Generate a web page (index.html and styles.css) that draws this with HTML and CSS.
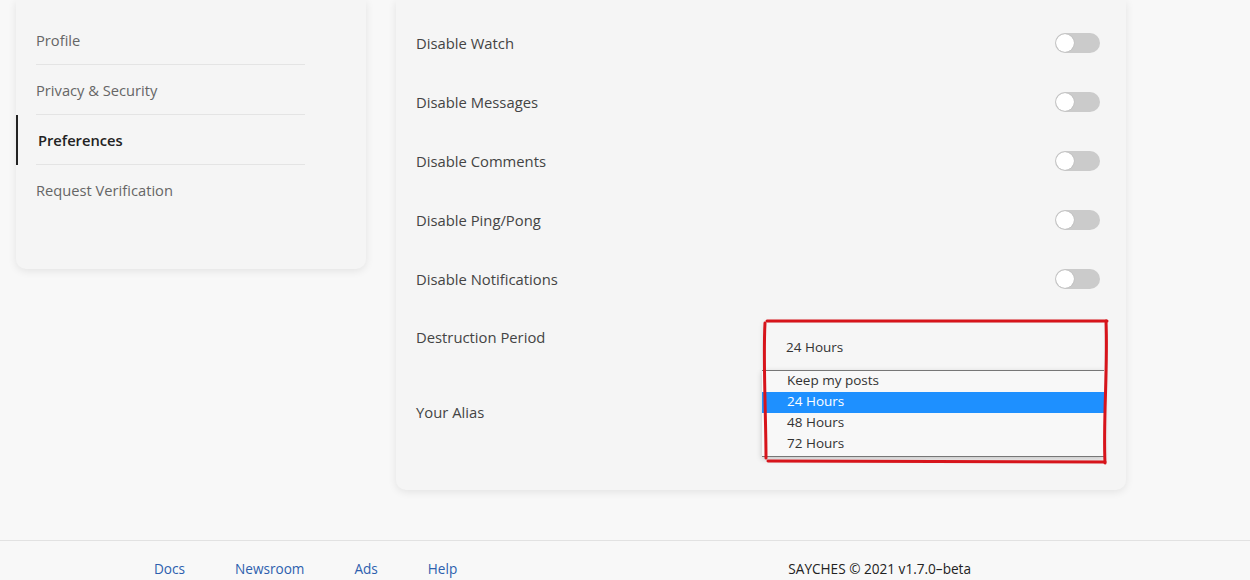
FILE: index.html
```html
<!DOCTYPE html>
<html>
<head>
    <title>Settings - Preferences</title>
    <link rel="stylesheet" href="styles.css">
</head>
<body>
    <div id="pageDiv">
        <div id="sideCard" class="card">
            <a class="navItem">Profile</a>
            <a class="navItem">Privacy &amp; Security</a>
            <a class="navItem active">Preferences</a>
            <a class="navItem last">Request Verification</a>
        </div>
        <div id="mainCard" class="card">
            <div class="row">
                <span class="label">Disable Watch</span>
                <span class="toggle"><span class="knob"></span></span>
            </div>
            <div class="row">
                <span class="label">Disable Messages</span>
                <span class="toggle"><span class="knob"></span></span>
            </div>
            <div class="row">
                <span class="label">Disable Comments</span>
                <span class="toggle"><span class="knob"></span></span>
            </div>
            <div class="row">
                <span class="label">Disable Ping/Pong</span>
                <span class="toggle"><span class="knob"></span></span>
            </div>
            <div class="row">
                <span class="label">Disable Notifications</span>
                <span class="toggle"><span class="knob"></span></span>
            </div>
            <div class="row selectRow">
                <span class="label">Destruction Period</span>
                <div class="selectWrap">
                    <div class="selectBox">24 Hours</div>
                    <div class="optionList">
                        <div class="option">Keep my posts</div>
                        <div class="option picked">24 Hours</div>
                        <div class="option">48 Hours</div>
                        <div class="option">72 Hours</div>
                    </div>
                    <svg class="scribble" width="350" height="148" viewBox="0 0 350 148">
                        <path d="M5 2 L345 2" />
                        <path d="M344 2 C346 50 341 100 343 144" />
                        <path d="M6 142 L343 143" />
                        <path d="M3 4 C1 40 4 100 4 139" />
                    </svg>
                </div>
            </div>
            <div class="row aliasRow">
                <span class="label">Your Alias</span>
            </div>
        </div>
    </div>
    <footer id="footer">
        <div id="links">
            <a class="link">Docs</a>
            <a class="link">Newsroom</a>
            <a class="link">Ads</a>
            <a class="link">Help</a>
        </div>
        <span id="copy">SAYCHES &copy; 2021 v1.7.0&ndash;beta</span>
    </footer>
</body>
</html>
```

FILE: styles.css
```css
body{
    margin: 0px;
    height: 580px;
    overflow: hidden;
    background-color: #f8f8f8;
    font-family: "Open Sans", "Noto Sans", sans-serif;
    color: #444;
}

#pageDiv{
    display: flex;
    flex-direction: row;
    align-items: flex-start;
    gap: 30px;
    padding-left: 16px;
    height: 540px;
}

.card{
    background-color: #f5f5f5;
    border-radius: 0px 0px 10px 10px;
    box-shadow: 0px 2px 8px rgba(0, 0, 0, 0.09);
}

#sideCard{
    display: flex;
    flex-direction: column;
    width: 350px;
    padding-top: 15px;
    padding-bottom: 55px;
}

.navItem{
    display: flex;
    align-items: center;
    height: 49px;
    margin-left: 20px;
    width: 269px;
    border-bottom: 1px solid #e4e4e4;
    font-size: 14.7px;
    color: #666;
}

.navItem.last{
    border-bottom: none;
}

.navItem.active{
    position: relative;
    padding-left: 2px;
    width: 267px;
    font-weight: 600;
    color: #222;
}

.navItem.active::before{
    content: "";
    position: absolute;
    left: -20px;
    top: 0px;
    width: 2px;
    height: 50px;
    background-color: #222;
}

#mainCard{
    display: flex;
    flex-direction: column;
    width: 730px;
    padding: 13px 26px 49px 20px;
    box-sizing: border-box;
}

.row{
    display: flex;
    flex-direction: row;
    justify-content: space-between;
    align-items: center;
    height: 59px;
}

.label{
    font-size: 14.8px;
    color: #444;
}

.toggle{
    display: flex;
    align-items: center;
    width: 45px;
    height: 20px;
    border-radius: 10px;
    background-color: #cbcbcb;
}

.knob{
    width: 18px;
    height: 18px;
    margin-left: 1px;
    border-radius: 50%;
    background-color: #fff;
    box-shadow: 0px 0px 1px rgba(0, 0, 0, 0.3);
}

.selectRow{
    height: 75px;
    align-items: flex-start;
}

.selectRow .label{
    line-height: 59px;
}

.selectWrap{
    position: relative;
    width: 340px;
    margin-top: 15px;
    margin-right: -4px;
}

.selectBox{
    display: flex;
    align-items: center;
    height: 48px;
    padding-left: 22px;
    font-size: 13.5px;
    color: #333;
    background-color: #f6f6f6;
    box-shadow: 0px 0px 6px rgba(0, 0, 0, 0.12);
}

.optionList{
    position: absolute;
    top: 47px;
    left: -2px;
    width: 342px;
    background-color: #f8f8f8;
    border-top: 1px solid #777;
    border-bottom: 1px solid #777;
    box-shadow: 0px 2px 6px rgba(0, 0, 0, 0.2);
    padding-bottom: 1px;
    z-index: 2;
}

.option{
    height: 21px;
    line-height: 19px;
    padding-left: 25px;
    font-size: 13.5px;
    color: #333;
}

.option.picked{
    background-color: #1e90ff;
    color: #fff;
}

.scribble{
    position: absolute;
    top: -4px;
    left: -2px;
    z-index: 3;
    overflow: visible;
}

.scribble path{
    fill: none;
    stroke: #d7141b;
    stroke-width: 3;
    stroke-linecap: round;
}

.aliasRow{
    height: 58px;
}

#footer{
    display: flex;
    flex-direction: row;
    align-items: center;
    height: 54px;
    border-top: 1px solid #e2e2e2;
    padding-left: 154px;
    padding-right: 279px;
    font-size: 13.6px;
}

#links{
    display: flex;
    flex-direction: row;
    gap: 50px;
}

.link{
    color: #2d5fae;
}

#copy{
    margin-left: auto;
    color: #222;
}
```
